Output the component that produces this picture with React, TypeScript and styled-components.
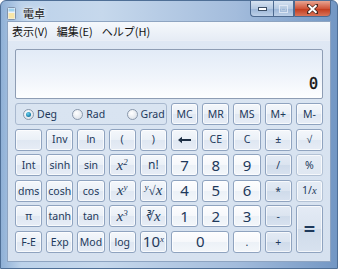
import styled, { createGlobalStyle, css } from "styled-components";

const Global = createGlobalStyle`
  html, body { margin: 0; padding: 0; background: #fff; }
  body { width: 338px; height: 269px; overflow: hidden; }
`;

const Window = styled.div`
  width: 338px;
  height: 269px;
  box-sizing: border-box;
  display: flex;
  flex-direction: column;
  border-radius: 6px 6px 0 0;
  border: 1px solid #4f6f96;
  background: linear-gradient(90deg, #8fb0d6 0%, #bcd2ea 6%, #c6d8ec 30%, #a3bcdc 70%, #7397c4 100%);
  overflow: hidden;
`;

const TitleBar = styled.div`
  height: 20px;
  display: flex;
  align-items: flex-start;
  padding-left: 6px;
`;

const Title = styled.span`
  margin-left: 7px;
  margin-top: 6px;
  font-family: "Noto Sans CJK JP", sans-serif;
  font-size: 11px;
  line-height: 12px;
  color: #1a1a1a;
  text-shadow: 0 0 6px #fff, 0 0 3px #fff;
`;

const Caption = styled.div`
  margin-left: auto;
  margin-right: 6px;
  display: flex;
  height: 17px;
  margin-top: -1px;
`;

const CapBtn = styled.div<{ $kind: "min" | "max" | "close" }>`
  height: 17px;
  box-sizing: border-box;
  border: 1px solid #4d6a90;
  display: flex;
  align-items: center;
  justify-content: center;
  ${(p) =>
    p.$kind === "close"
      ? css`
          width: 37px;
          border-radius: 0 0 4px 0;
          background: linear-gradient(#e8a592, #d0553a 50%, #c43d1f 55%, #d8745a);
        `
      : css`
          width: ${p.$kind === "min" ? 23 : 21}px;
          border-right: ${p.$kind === "min" ? "none" : "1px solid #4d6a90"};
          border-radius: ${p.$kind === "min" ? "0 0 0 4px" : "0"};
          background: linear-gradient(#d6e3f1, #b4c9e2 50%, #9db7d8 55%, #bdd0e8);
        `}
`;

const Client = styled.div`
  flex: 1;
  margin: 0 6px 6px;
  display: flex;
  flex-direction: column;
  border: 1px solid #8ea4c1;
  background: #d9e4f1;
`;

const MenuBar = styled.div`
  height: 18px;
  display: flex;
  align-items: center;
  gap: 9px;
  padding-left: 4px;
  background: linear-gradient(#f5f8fc, #e6ecf5);
  border-bottom: 1px solid #e9eef6;
`;

const MenuItem = styled.span`
  font-family: "Noto Sans CJK JP", sans-serif;
  font-size: 11px;
  color: #111;
`;

const Body = styled.div`
  flex: 1;
  padding: 8px 7px 0 7px;
  display: flex;
  flex-direction: column;
  gap: 4px;
  background: linear-gradient(#dfe8f4, #d9e4f1 30%, #d6e1ef);
`;

const Display = styled.div`
  height: 50px;
  box-sizing: border-box;
  border: 1px solid #8e9db4;
  border-radius: 2px;
  background: linear-gradient(#e2ebf7, #f1f5fb 60%, #fdfeff);
  display: flex;
  align-items: flex-end;
  justify-content: flex-end;
  padding: 0 4px 8px 0;
  font-family: "DejaVu Sans Mono", monospace;
  font-size: 15px;
  line-height: 12px;
  color: #111;
  -webkit-text-stroke: 0.4px #111;
`;

const Keys = styled.div`
  display: grid;
  grid-template-columns: repeat(10, 1fr);
  grid-template-rows: repeat(6, 22px);
  column-gap: 4px;
  row-gap: 3.6px;
`;

const RadioGroup = styled.div`
  grid-column: 1 / span 5;
  box-sizing: border-box;
  border: 1px solid #a9b9cf;
  border-radius: 3px;
  display: flex;
  align-items: center;
  padding-left: 7px;
  font-family: "Noto Sans", sans-serif;
  font-size: 10.5px;
  color: #1e395b;
`;

const RadioLabel = styled.label<{ $w: number }>`
  display: flex;
  align-items: center;
  gap: 3px;
  width: ${(p) => p.$w}px;
`;

const Dot = styled.span<{ $on?: boolean }>`
  width: 9px;
  height: 9px;
  border-radius: 50%;
  border: 1px solid #8a98ac;
  background: radial-gradient(circle at 40% 35%, #fff, #d4dbe4);
  display: flex;
  align-items: center;
  justify-content: center;
  &::after {
    content: "";
    display: ${(p) => (p.$on ? "block" : "none")};
    width: 5px;
    height: 5px;
    border-radius: 50%;
    background: radial-gradient(circle at 40% 35%, #6fd2f0, #137aa6 70%, #0b4f72);
  }
`;

type Tone = "fn" | "digit" | "op" | "flat";

const tones = {
  fn: css`
    background: linear-gradient(#f4f7fb, #eaf0f7 50%, #dfe7f2 51%, #e7edf6);
  `,
  digit: css`
    background: linear-gradient(#fdfdfe, #f6f8fb 50%, #ecf1f7 51%, #f3f6fa);
  `,
  op: css`
    background: linear-gradient(#e4ebf5, #dbe4f0 50%, #cfdbea 51%, #d8e2ef);
  `,
  flat: css`
    background: linear-gradient(#e5ecf5, #dfe7f1);
    border-color: #b3c2d5;
  `,
};

const Key = styled.button<{ $tone?: Tone; $span?: number; $tall?: boolean; $big?: boolean; $math?: boolean }>`
  margin: 0;
  padding: 0;
  box-sizing: border-box;
  border: 1px solid #8fa3bf;
  border-radius: 3px;
  box-shadow: inset 0 0 0 1px rgba(255, 255, 255, 0.7);
  color: #1e395b;
  font-family: "Noto Sans", sans-serif;
  font-size: 10.5px;
  line-height: 1;
  text-align: center;
  white-space: nowrap;
  ${(p) => tones[p.$tone ?? "fn"]}
  ${(p) => p.$span && css`grid-column: span ${p.$span};`}
  ${(p) => p.$tall && css`grid-row: span 2; font-size: 20px; font-weight: bold;`}
  ${(p) => p.$big && css`font-size: 15px;`}
  ${(p) =>
    p.$math &&
    css`
      font-family: "Liberation Serif", serif;
      font-style: italic;
      font-size: 15px;
    `}
`;

const Sup = styled.sup`
  font-size: 9px;
  vertical-align: 5px;
  line-height: 0;
`;

const Upright = styled.span`
  font-style: normal;
  font-size: 13px;
`;

const Italic = styled.i`
  font-family: "Liberation Serif", serif;
`;

function CalcIcon() {
  return (
    <svg width="9" height="13" viewBox="0 0 9 13" style={{ marginTop: 6 }}>
      <rect x="0.5" y="0.5" width="8" height="12" rx="1" fill="#eef3f9" stroke="#7f93ad" />
      <rect x="1.5" y="1.5" width="6" height="3" fill="#9fd2ef" />
      <rect x="1.5" y="6" width="6" height="5.5" fill="#f8e6a8" />
    </svg>
  );
}

function BackArrow() {
  return (
    <svg width="15" height="8" viewBox="0 0 15 8" style={{ display: "block", margin: "0 auto" }}>
      <path d="M1 4 L5 0.8 L5 3 L14 3 L14 5 L5 5 L5 7.2 Z" fill="#1e2f45" />
    </svg>
  );
}

export default function App(): JSX.Element {
  return (
    <>
      <Global />
      <Window>
        <TitleBar>
          <CalcIcon />
          <Title>電卓</Title>
          <Caption>
            <CapBtn $kind="min">
              <svg width="9" height="4"><rect x="0.5" y="0.5" width="8" height="3" fill="#fff" stroke="#3d4f66" /></svg>
            </CapBtn>
            <CapBtn $kind="max">
              <svg width="9" height="8"><rect x="0.5" y="0.5" width="8" height="7" fill="none" stroke="#e7eef7" opacity="0.8" /><rect x="2.5" y="2.5" width="4" height="3" fill="none" stroke="#b9cbe0" /></svg>
            </CapBtn>
            <CapBtn $kind="close">
              <svg width="11" height="10" viewBox="0 0 11 10">
                <path d="M1 1 L10 9 M10 1 L1 9" stroke="#4a2a22" strokeWidth="3.4" strokeLinecap="square" />
                <path d="M1.5 1.2 L9.5 8.8 M9.5 1.2 L1.5 8.8" stroke="#fff" strokeWidth="2" />
              </svg>
            </CapBtn>
          </Caption>
        </TitleBar>
        <Client>
          <MenuBar>
            <MenuItem>表示(V)</MenuItem>
            <MenuItem>編集(E)</MenuItem>
            <MenuItem>ヘルプ(H)</MenuItem>
          </MenuBar>
          <Body>
            <Display>0</Display>
            <Keys>
              <RadioGroup>
                <RadioLabel $w={50}><Dot $on />Deg</RadioLabel>
                <RadioLabel $w={55}><Dot />Rad</RadioLabel>
                <RadioLabel $w={40}><Dot />Grad</RadioLabel>
              </RadioGroup>
              <Key>MC</Key>
              <Key>MR</Key>
              <Key>MS</Key>
              <Key>M+</Key>
              <Key>M-</Key>

              <Key />
              <Key>Inv</Key>
              <Key>ln</Key>
              <Key>(</Key>
              <Key>)</Key>
              <Key><BackArrow /></Key>
              <Key>CE</Key>
              <Key>C</Key>
              <Key>±</Key>
              <Key>√</Key>

              <Key>Int</Key>
              <Key>sinh</Key>
              <Key>sin</Key>
              <Key $math>x<Sup>2</Sup></Key>
              <Key style={{ fontSize: 12 }}>n!</Key>
              <Key $tone="digit" $big>7</Key>
              <Key $tone="digit" $big>8</Key>
              <Key $tone="digit" $big>9</Key>
              <Key $tone="op">/</Key>
              <Key $tone="flat">%</Key>

              <Key>dms</Key>
              <Key>cosh</Key>
              <Key>cos</Key>
              <Key $math>x<Sup>y</Sup></Key>
              <Key $math><Sup>y</Sup><Upright>√</Upright>x</Key>
              <Key $tone="digit" $big>4</Key>
              <Key $tone="digit" $big>5</Key>
              <Key $tone="digit" $big>6</Key>
              <Key $tone="op">*</Key>
              <Key $tone="flat">1/<Italic>x</Italic></Key>

              <Key>π</Key>
              <Key>tanh</Key>
              <Key>tan</Key>
              <Key $math>x<Sup>3</Sup></Key>
              <Key $math><Upright>∛</Upright>x</Key>
              <Key $tone="digit" $big>1</Key>
              <Key $tone="digit" $big>2</Key>
              <Key $tone="digit" $big>3</Key>
              <Key $tone="op">-</Key>
              <Key $tone="op" $tall>=</Key>

              <Key>F-E</Key>
              <Key>Exp</Key>
              <Key>Mod</Key>
              <Key>log</Key>
              <Key $big>10<Sup><Italic>x</Italic></Sup></Key>
              <Key $tone="digit" $big $span={2}>0</Key>
              <Key $tone="digit">.</Key>
              <Key $tone="op">+</Key>
            </Keys>
          </Body>
        </Client>
      </Window>
    </>
  );
}
